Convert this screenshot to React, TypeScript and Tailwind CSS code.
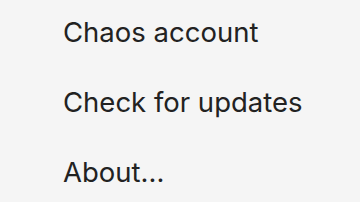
export default function App() {
  return (
    <div className="w-[360px] h-[202px] bg-[#f5f5f5] overflow-hidden" style={{ fontFamily: "Inter, sans-serif" }}>
      <div className="flex flex-col pl-[63px] pt-[14px] text-[27.5px] leading-[36px] text-[#222222]">
        <div className="h-[70px]">Chaos account</div>
        <div className="h-[70px]">Check for updates</div>
        <div className="h-[70px]">About...</div>
      </div>
    </div>
  );
}
